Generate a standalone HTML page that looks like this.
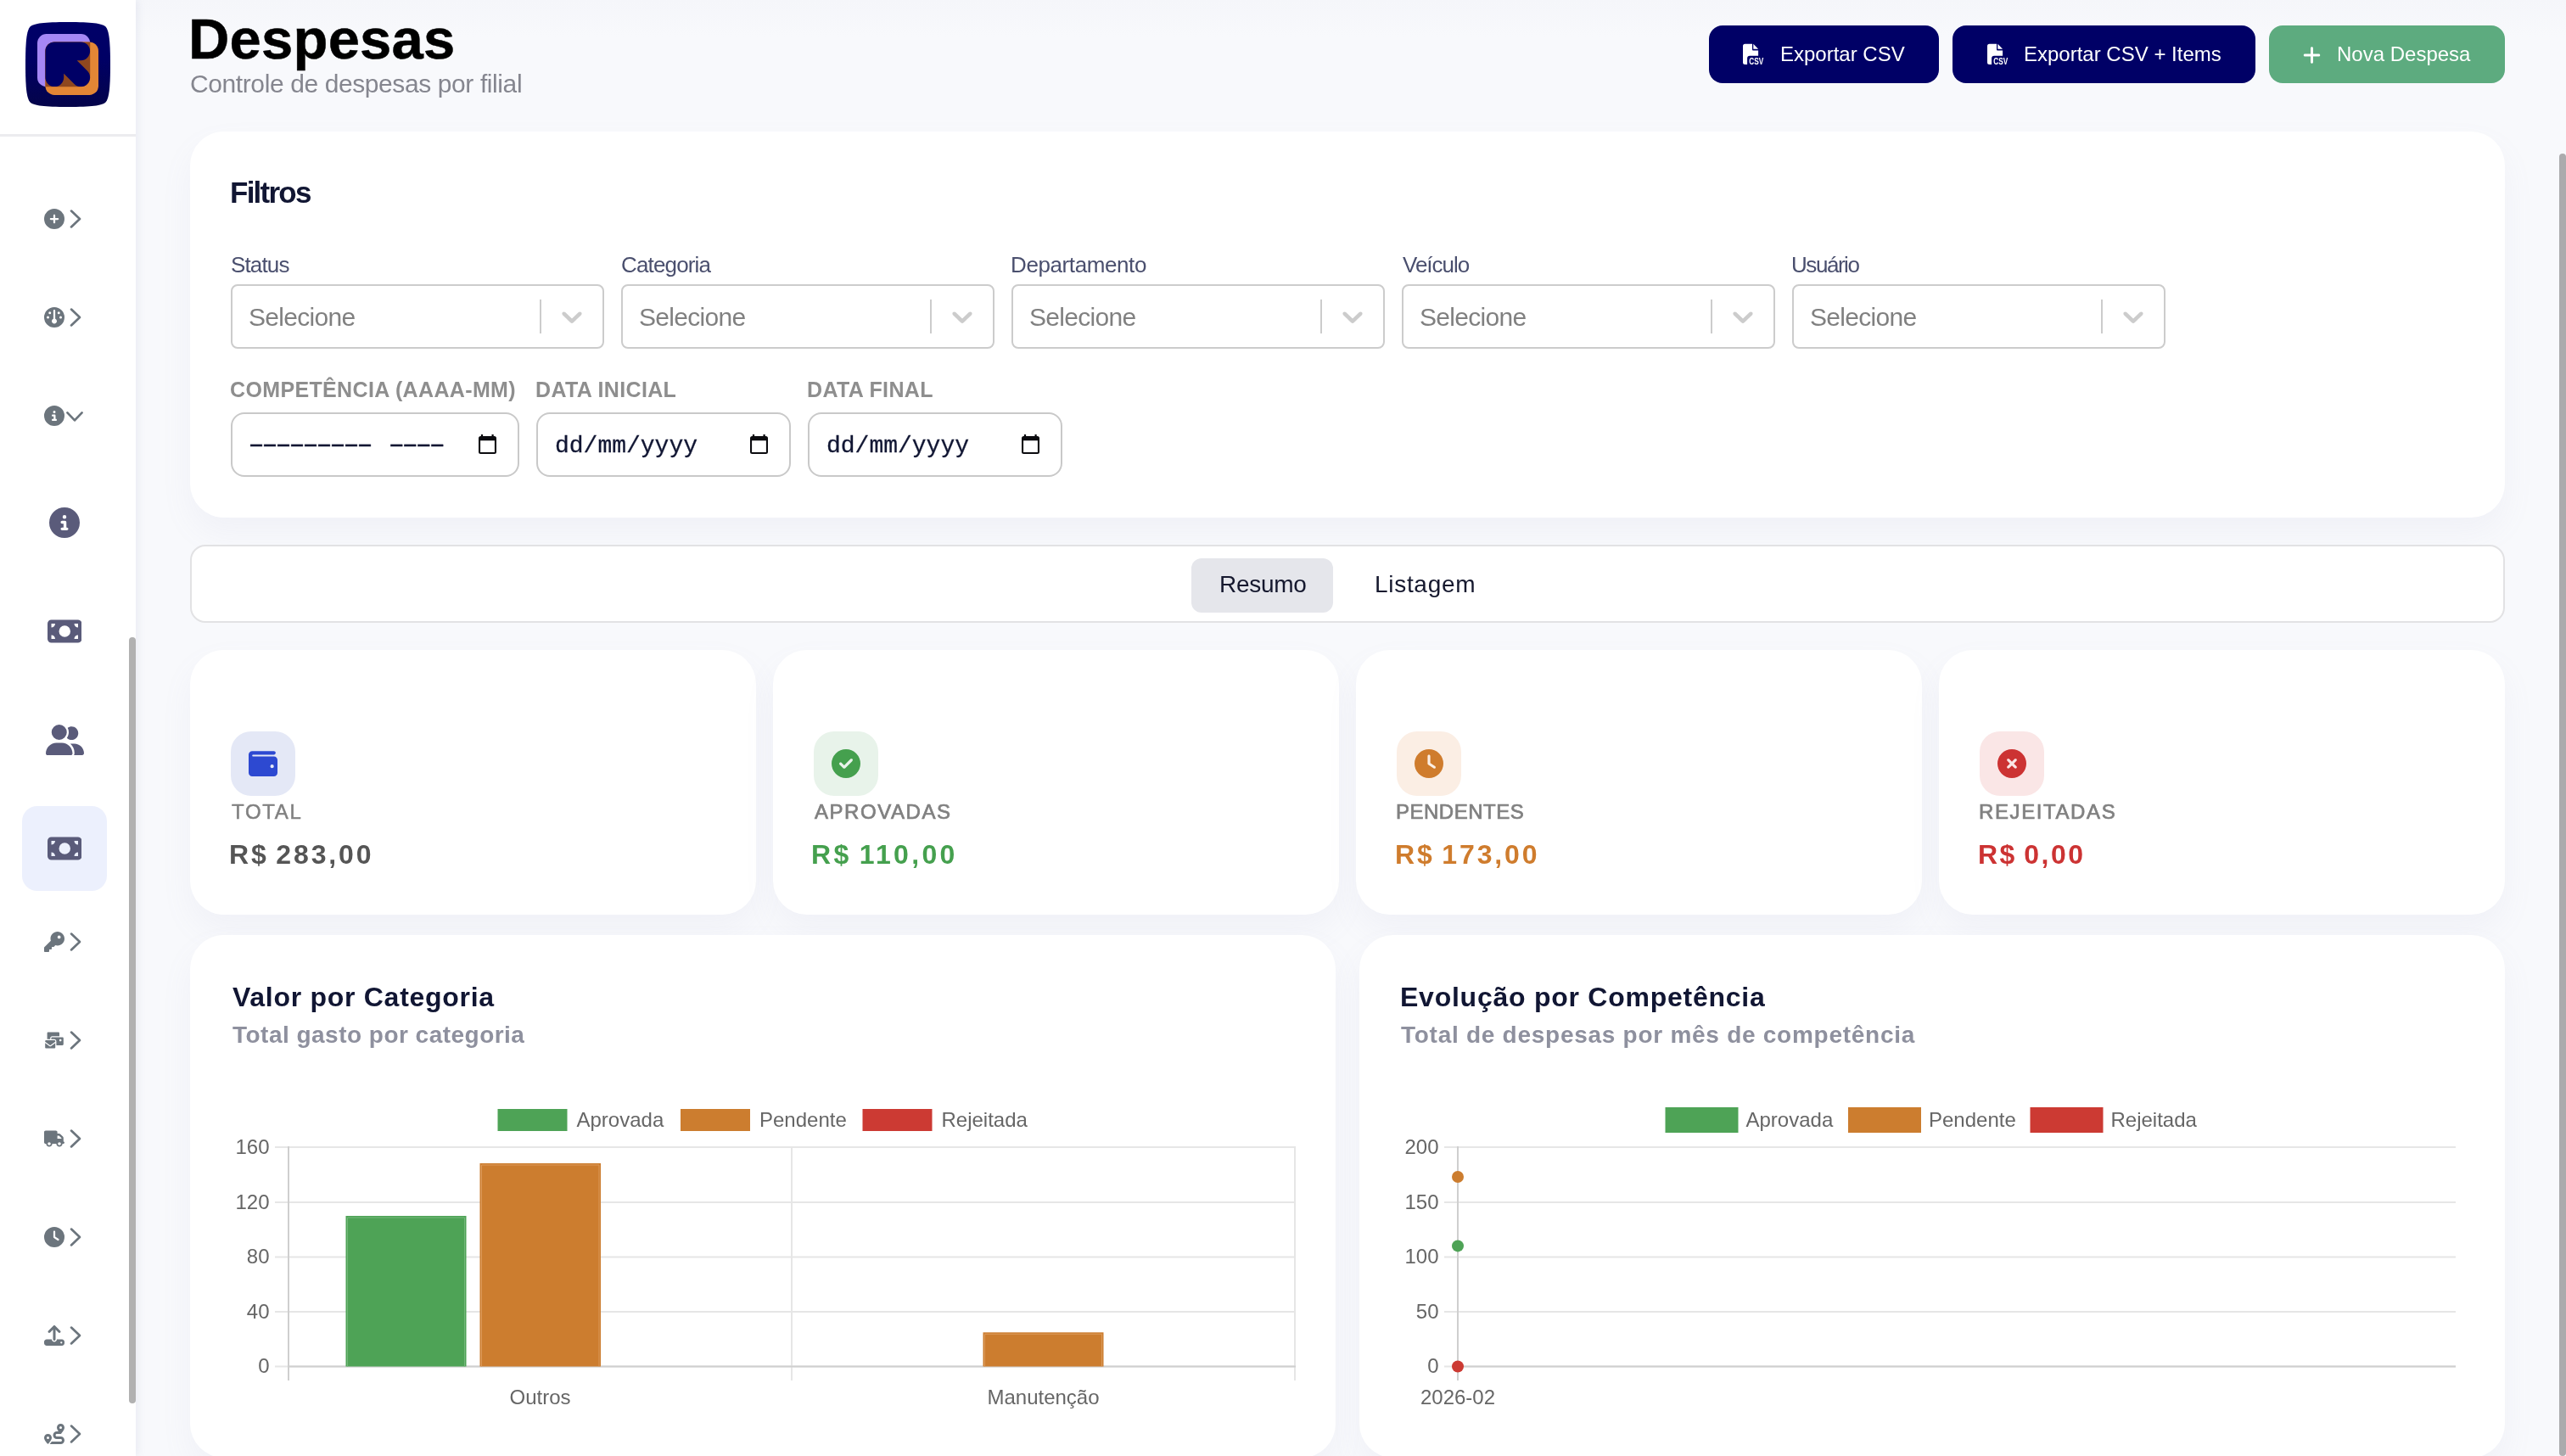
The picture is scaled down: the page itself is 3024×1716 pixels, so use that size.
<!DOCTYPE html>
<html lang="pt-BR">
<head>
<meta charset="utf-8">
<title>Despesas</title>
<style>
*{box-sizing:border-box;margin:0;padding:0}
html,body{width:3024px;height:1716px;overflow:hidden}
body{font-family:"Liberation Sans",sans-serif;background:#f8f9fc;position:relative;color:#111633}
.abs{position:absolute}
.t{position:absolute;white-space:nowrap;line-height:1;will-change:transform}
svg.tx{will-change:transform}
#side{position:absolute;left:0;top:0;width:160px;height:1716px;background:#fff;box-shadow:3px 0 8px rgba(150,153,185,.13)}
#side .hr{position:absolute;left:0;top:158px;width:160px;height:3px;background:#ececef}
#side .sb{position:absolute;left:152px;top:751px;width:8px;height:903px;border-radius:4px;background:#b1b1b1}
#side .act{position:absolute;left:26px;top:950px;width:100px;height:100px;border-radius:18px;background:#ecf0fd}
#main{position:absolute;left:160px;top:0;width:2864px;height:1716px;background:linear-gradient(180deg,#f5f6fa 0,#f8f9fc 44px,#f8f9fc 100%)}
.card{position:absolute;background:#fff;border-radius:40px;box-shadow:0 18px 36px rgba(150,153,185,.075)}
.vsb{position:absolute;left:3016px;top:181px;width:8px;height:1535px;border-radius:4px;background:#ababad}
.btn{position:absolute;top:30px;height:68px;border-radius:16px;color:#fff;border:0;padding:0;font:inherit;text-align:left;overflow:visible}
.sel{position:absolute;top:335px;width:440px;height:76px;border:2px solid #cccccc;border-radius:8px;background:#fff}
.sel i{position:absolute;left:362px;top:16px;width:2px;height:40px;background:#cccccc}
.sel svg{position:absolute;left:380px;top:16px}
.inp{position:absolute;top:486px;height:76px;border:2px solid #c9c9c9;border-radius:16px;background:#fff}
.lab{color:#4a4f6e;font-size:26px;letter-spacing:-.85px}
.ph{color:#808080;font-size:30px;letter-spacing:-.7px}
.lab2{color:#8e8e8e;font-size:25px;font-weight:bold;letter-spacing:.35px}
.mono{font-family:"Liberation Mono",monospace;font-size:28px;color:#111633;-webkit-text-stroke:.3px #111633}

.sl{color:#808080;font-size:24px;letter-spacing:1.1px}
.sv{font-size:32px;font-weight:bold;letter-spacing:2px}
.ct{font-size:32px;font-weight:bold;color:#111633;letter-spacing:.55px}
.cs{font-size:28px;font-weight:bold;color:#8e909e;letter-spacing:.48px}
.bt{font-size:24px;color:#fff}
@media (max-width:2200px){html{zoom:.5}}
</style>
</head>
<body>
<div id="main"></div>
<nav id="side">
  <div class="hr"></div>
  <div class="sb"></div>
  <div class="act"></div>
<svg class="abs" style="left:52px;top:246px" width="24" height="24" viewBox="0 0 512 512"><path fill="#6c757d" d="M256 512A256 256 0 1 0 256 0a256 256 0 1 0 0 512zM232 344V280H168c-13.3 0-24-10.7-24-24s10.7-24 24-24h64V168c0-13.3 10.7-24 24-24s24 10.7 24 24v64h64c13.3 0 24 10.7 24 24s-10.7 24-24 24H280v64c0 13.3-10.7 24-24 24s-24-10.7-24-24z"/></svg>
<svg class="abs" style="left:80px;top:246px" width="20" height="24" viewBox="0 0 20 24"><path d="M4 2.600L14 12L4 21.400" fill="none" stroke="#6c757d" stroke-width="2.700" stroke-linecap="round" stroke-linejoin="round"/></svg>
<svg class="abs" style="left:52px;top:362px" width="24" height="24" viewBox="0 0 512 512"><path fill="#6c757d" d="M0 256a256 256 0 1 1 512 0A256 256 0 1 1 0 256zm320 96c0-26.9-16.5-49.900-40-59.300V88c0-13.300-10.700-24-24-24s-24 10.700-24 24V292.700c-23.500 9.500-40 32.500-40 59.300c0 35.300 28.700 64 64 64s64-28.700 64-64zM144 176a32 32 0 1 0 0-64 32 32 0 1 0 0 64zm-16 80a32 32 0 1 0 -64 0 32 32 0 1 0 64 0zm288 32a32 32 0 1 0 0-64 32 32 0 1 0 0 64zM400 144a32 32 0 1 0 -64 0 32 32 0 1 0 64 0z"/></svg>
<svg class="abs" style="left:80px;top:362px" width="20" height="24" viewBox="0 0 20 24"><path d="M4 2.600L14 12L4 21.400" fill="none" stroke="#6c757d" stroke-width="2.700" stroke-linecap="round" stroke-linejoin="round"/></svg>
<svg class="abs" style="left:52px;top:478px" width="24" height="24" viewBox="0 0 512 512"><path fill="#6c757d" d="M256 512A256 256 0 1 0 256 0a256 256 0 1 0 0 512zM216 336h24V272H216c-13.300 0-24-10.700-24-24s10.700-24 24-24h48c13.300 0 24 10.700 24 24v88h8c13.300 0 24 10.700 24 24s-10.700 24-24 24H216c-13.300 0-24-10.700-24-24s10.700-24 24-24zm40-208a32 32 0 1 1 0 64 32 32 0 1 1 0-64z"/></svg>
<svg class="abs" style="left:76px;top:478px" width="24" height="24" viewBox="0 0 24 24"><path d="M3.400 8.400L12 17.400L20.600 8.400" fill="none" stroke="#6c757d" stroke-width="2.700" stroke-linecap="round" stroke-linejoin="round"/></svg>
<svg class="abs" style="left:52px;top:1098px" width="24" height="24" viewBox="0 0 512 512"><path fill="#6c757d" d="M336 352c97.200 0 176-78.800 176-176S433.200 0 336 0S160 78.800 160 176c0 18.700 2.900 36.800 8.300 53.700L7 391c-4.500 4.500-7 10.600-7 17v80c0 13.300 10.700 24 24 24h80c13.300 0 24-10.700 24-24V448h40c13.300 0 24-10.700 24-24V384h40c6.400 0 12.500-2.500 17-7l33.300-33.300c16.900 5.400 35 8.300 53.700 8.300zM376 96a40 40 0 1 1 0 80 40 40 0 1 1 0-80z"/></svg>
<svg class="abs" style="left:80px;top:1098px" width="20" height="24" viewBox="0 0 20 24"><path d="M4 2.600L14 12L4 21.400" fill="none" stroke="#6c757d" stroke-width="2.700" stroke-linecap="round" stroke-linejoin="round"/></svg>
<svg class="abs" style="left:52px;top:1214px" width="24" height="24" viewBox="0 0 640 512"><path fill="#6c757d" d="M128 0C110.300 0 96 14.300 96 32V224h96V192c0-35.300 28.700-64 64-64H480V32c0-17.700-14.300-32-32-32H128zM256 160c-17.700 0-32 14.300-32 32v32h96c35.300 0 64 28.700 64 64V416H576c17.700 0 32-14.300 32-32V192c0-17.700-14.300-32-32-32H256zm240 64h32c8.800 0 16 7.200 16 16v32c0 8.800-7.200 16-16 16H496c-8.800 0-16-7.200-16-16V240c0-8.800 7.200-16 16-16zM64 256c-17.700 0-32 14.300-32 32v13L187.100 415.900c1.400 1 3.100 1.600 4.900 1.600s3.500-.6 4.900-1.600L352 301V288c0-17.700-14.300-32-32-32H64zm288 84.800L216 441.600c-6.900 5.100-15.300 7.900-24 7.900s-17-2.800-24-7.900L32 340.800V480c0 17.700 14.300 32 32 32H320c17.700 0 32-14.300 32-32V340.800z"/></svg>
<svg class="abs" style="left:80px;top:1214px" width="20" height="24" viewBox="0 0 20 24"><path d="M4 2.600L14 12L4 21.400" fill="none" stroke="#6c757d" stroke-width="2.700" stroke-linecap="round" stroke-linejoin="round"/></svg>
<svg class="abs" style="left:52px;top:1330px" width="24" height="24" viewBox="0 0 640 512"><path fill="#6c757d" d="M48 0C21.500 0 0 21.500 0 48V368c0 26.500 21.500 48 48 48H64c0 53 43 96 96 96s96-43 96-96H384c0 53 43 96 96 96s96-43 96-96h32c17.700 0 32-14.300 32-32s-14.300-32-32-32V288 256 237.300c0-17-6.700-33.300-18.700-45.300L512 114.700c-12-12-28.300-18.700-45.300-18.700H416V48c0-26.500-21.500-48-48-48H48zM416 160h50.700L544 237.300V256H416V160zM112 416a48 48 0 1 1 96 0 48 48 0 1 1 -96 0zm368-48a48 48 0 1 1 0 96 48 48 0 1 1 0-96z"/></svg>
<svg class="abs" style="left:80px;top:1330px" width="20" height="24" viewBox="0 0 20 24"><path d="M4 2.600L14 12L4 21.400" fill="none" stroke="#6c757d" stroke-width="2.700" stroke-linecap="round" stroke-linejoin="round"/></svg>
<svg class="abs" style="left:52px;top:1446px" width="24" height="24" viewBox="0 0 512 512"><path fill="#6c757d" d="M256 0a256 256 0 1 1 0 512A256 256 0 1 1 256 0zM232 120V256c0 8 4 15.500 10.700 20l96 64c11 7.400 25.900 4.400 33.300-6.700s4.400-25.900-6.700-33.300L280 243.200V120c0-13.300-10.700-24-24-24s-24 10.700-24 24z"/></svg>
<svg class="abs" style="left:80px;top:1446px" width="20" height="24" viewBox="0 0 20 24"><path d="M4 2.600L14 12L4 21.400" fill="none" stroke="#6c757d" stroke-width="2.700" stroke-linecap="round" stroke-linejoin="round"/></svg>
<svg class="abs" style="left:52px;top:1562px" width="24" height="24" viewBox="0 0 512 512"><path fill="#6c757d" d="M288 109.300V352c0 17.700-14.300 32-32 32s-32-14.300-32-32V109.300l-73.400 73.400c-12.500 12.500-32.800 12.500-45.300 0s-12.500-32.800 0-45.300l128-128c12.500-12.500 32.800-12.500 45.300 0l128 128c12.500 12.500 12.500 32.800 0 45.300s-32.800 12.500-45.300 0L288 109.300zM64 352H192c0 35.300 28.700 64 64 64s64-28.700 64-64H448c35.300 0 64 28.700 64 64v32c0 35.300-28.700 64-64 64H64c-35.300 0-64-28.700-64-64V416c0-35.300 28.700-64 64-64zM432 456a24 24 0 1 0 0-48 24 24 0 1 0 0 48z"/></svg>
<svg class="abs" style="left:80px;top:1562px" width="20" height="24" viewBox="0 0 20 24"><path d="M4 2.600L14 12L4 21.400" fill="none" stroke="#6c757d" stroke-width="2.700" stroke-linecap="round" stroke-linejoin="round"/></svg>
<svg class="abs" style="left:52px;top:1678px" width="24" height="24" viewBox="0 0 512 512"><path fill="#6c757d" d="M512 96c0 50.200-59.100 125.100-84.600 155c-3.800 4.400-9.400 6.100-14.500 5H320c-17.700 0-32 14.300-32 32s14.300 32 32 32h96c53 0 96 43 96 96s-43 96-96 96H139.600c8.700-9.900 19.300-22.600 30-36.800c6.300-8.400 12.800-17.600 19-27.200H416c17.700 0 32-14.300 32-32s-14.300-32-32-32H320c-53 0-96-43-96-96s43-96 96-96h39.800c-21-31.500-39.800-67.700-39.800-96c0-53 43-96 96-96s96 43 96 96zM117.100 489.100c-3.800 4.300-7.200 8.100-10.100 11.300l-1.800 2-.2-.2c-6 4.600-14.600 4-20-1.800C59.800 473 0 402.500 0 352c0-53 43-96 96-96s96 43 96 96c0 30-21.100 67-43.500 97.900c-10.700 14.700-21.700 28-30.800 38.500l-.6 .7zM128 352a32 32 0 1 0 -64 0 32 32 0 1 0 64 0zM416 128a32 32 0 1 0 0-64 32 32 0 1 0 0 64z"/></svg>
<svg class="abs" style="left:80px;top:1678px" width="20" height="24" viewBox="0 0 20 24"><path d="M4 2.600L14 12L4 21.400" fill="none" stroke="#6c757d" stroke-width="2.700" stroke-linecap="round" stroke-linejoin="round"/></svg>
<svg class="abs" style="left:58px;top:598px" width="36" height="36" viewBox="0 0 512 512"><path fill="#5a5b7a" d="M256 512A256 256 0 1 0 256 0a256 256 0 1 0 0 512zM216 336h24V272H216c-13.300 0-24-10.700-24-24s10.700-24 24-24h48c13.300 0 24 10.700 24 24v88h8c13.300 0 24 10.700 24 24s-10.700 24-24 24H216c-13.300 0-24-10.700-24-24s10.700-24 24-24zm40-208a32 32 0 1 1 0 64 32 32 0 1 1 0-64z"/></svg>
<svg class="abs" style="left:55.75px;top:726px" width="40.5" height="36" viewBox="0 0 576 512"><path fill="#5a5b7a" d="M64 64C28.700 64 0 92.700 0 128V384c0 35.300 28.700 64 64 64H512c35.300 0 64-28.700 64-64V128c0-35.300-28.700-64-64-64H64zm64 320H64V320c35.300 0 64 28.700 64 64zM64 192V128h64c0 35.300-28.700 64-64 64zM448 384c0-35.300 28.700-64 64-64v64H448zm64-192c-35.300 0-64-28.700-64-64h64v64zM288 160a96 96 0 1 1 0 192 96 96 0 1 1 0-192z"/></svg>
<svg class="abs" style="left:54px;top:854px" width="45" height="36" viewBox="0 0 640 512"><path fill="#5a5b7a" d="M96 128a128 128 0 1 1 256 0A128 128 0 1 1 96 128zM0 482.300C0 383.800 79.800 304 178.300 304h91.400C368.200 304 448 383.800 448 482.300c0 16.400-13.300 29.700-29.700 29.700H29.700C13.300 512 0 498.700 0 482.300zM609.300 512H471.400c5.400-9.400 8.600-20.300 8.600-32v-8c0-60.700-27.100-115.200-69.800-151.800c2.400-.1 4.700-.2 7.100-.2h61.400C567.800 320 640 392.200 640 481.300c0 17-13.800 30.700-30.700 30.700zM432 256c-31 0-59-12.600-79.300-32.900C372.400 196.500 384 163.600 384 128c0-26.800-6.600-52.100-18.300-74.300C384.300 40.100 407.200 32 432 32c61.900 0 112 50.100 112 112s-50.100 112-112 112z"/></svg>
<svg class="abs" style="left:55.75px;top:982px" width="40.5" height="36" viewBox="0 0 576 512"><path fill="#5a5b7a" d="M64 64C28.700 64 0 92.700 0 128V384c0 35.300 28.700 64 64 64H512c35.300 0 64-28.700 64-64V128c0-35.300-28.700-64-64-64H64zm64 320H64V320c35.300 0 64 28.700 64 64zM64 192V128h64c0 35.300-28.700 64-64 64zM448 384c0-35.300 28.700-64 64-64v64H448zm64-192c-35.300 0-64-28.700-64-64h64v64zM288 160a96 96 0 1 1 0 192 96 96 0 1 1 0-192z"/></svg>
<svg class="abs" style="left:30px;top:26px" width="100" height="100" viewBox="0 0 100 100">
<defs><linearGradient id="lg" x1="0" y1="0" x2="0" y2="1"><stop offset="0" stop-color="#000068"/><stop offset=".45" stop-color="#000064"/><stop offset="1" stop-color="#04044a"/></linearGradient>
<clipPath id="cp"><rect x="23.400" y="23.400" width="62.600" height="62.600" rx="10.700"/></clipPath></defs>
<path fill="url(#lg)" d="M50 0C78 0 90 1.500 94.500 5.500C98.500 10 100 22 100 50C100 78 98.500 90 94.500 94.500C90 98.500 78 100 50 100C22 100 10 98.500 5.500 94.500C1.500 90 0 78 0 50C0 22 1.500 10 5.500 5.500C10 1.500 22 0 50 0Z"/>
<rect x="14" y="14" width="62.200" height="62.200" rx="10.700" fill="#a587f5"/>
<rect x="23.400" y="23.400" width="62.600" height="62.600" rx="10.700" fill="#e38635"/>
<rect x="14" y="14" width="62.200" height="62.200" rx="10.700" fill="#8f471f" clip-path="url(#cp)"/>
<path d="M65.200 34.300H34.300V65.200M34.300 34.300L65.200 65.200" fill="none" stroke="#000066" stroke-width="21.800" stroke-linecap="round" stroke-linejoin="round"/>
</svg>
</nav>

<!-- header -->
<h1 class="t" id="h1" style="left:222.300px;top:12px;font-size:67px;font-weight:bold;color:#000;letter-spacing:.2px;-webkit-text-stroke:.5px #000">Despesas</h1>
<p class="t" id="h2" style="left:224px;top:84px;font-size:30px;color:#85868f;letter-spacing:-.4px">Controle de despesas por filial</p>


<button type="button" class="btn" style="left:2014px;width:271px;background:#000066"><svg class="abs tx" style="left:40px;top:20px" width="28" height="28" viewBox="0 0 28 28" font-family="Liberation Sans, sans-serif"><path fill="#fff" d="M2.500 1.800H11V8.600A1 1 0 0 0 12 9.600H18.100V15.700H8.200A3.100 3.100 0 0 0 5.100 18.800V26H2.500A2.500 2.500 0 0 1 0 23.500V4.300A2.500 2.500 0 0 1 2.500 1.800ZM12.300 1.800L18.100 7.800H12.300Z"/><text x="7.200" y="26" font-size="10.500" font-weight="bold" fill="#fff" textLength="17" lengthAdjust="spacingAndGlyphs">CSV</text></svg><span class="t bt" id="b1" style="left:84px;top:22px">Exportar CSV</span></button>
<button type="button" class="btn" style="left:2301px;width:357px;background:#000066"><svg class="abs tx" style="left:41px;top:20px" width="28" height="28" viewBox="0 0 28 28" font-family="Liberation Sans, sans-serif"><path fill="#fff" d="M2.500 1.800H11V8.600A1 1 0 0 0 12 9.600H18.100V15.700H8.200A3.100 3.100 0 0 0 5.100 18.800V26H2.500A2.500 2.500 0 0 1 0 23.500V4.300A2.500 2.500 0 0 1 2.500 1.800ZM12.300 1.800L18.100 7.800H12.300Z"/><text x="7.200" y="26" font-size="10.500" font-weight="bold" fill="#fff" textLength="17" lengthAdjust="spacingAndGlyphs">CSV</text></svg><span class="t bt" id="b2" style="left:84px;top:22px">Exportar CSV + Items</span></button>
<button type="button" class="btn" style="left:2674px;width:278px;background:#5dab7f"><svg class="abs" id="plusic" style="left:40.1px;top:22.5px" width="21" height="24" viewBox="0 0 448 512"><path fill="#fff" d="M256 80c0-17.700-14.300-32-32-32s-32 14.300-32 32V224H48c-17.700 0-32 14.300-32 32s14.300 32 32 32H192V432c0 17.700 14.300 32 32 32s32-14.300 32-32V288H400c17.700 0 32-14.300 32-32s-14.300-32-32-32H256V80z"/></svg><span class="t bt" id="b3" style="left:80px;top:22px">Nova Despesa</span></button>
<!-- filter card -->
<div class="card" style="left:224px;top:155px;width:2728px;height:455px"></div>
<!-- tabs card -->
<div class="abs" style="left:224px;top:642px;width:2728px;height:92px;background:#fff;border:2px solid #e2e2e4;border-radius:18px"></div>
<!-- stat cards -->
<div class="card" style="left:224px;top:766px;width:667px;height:312px"></div>
<div class="card" style="left:911px;top:766px;width:667px;height:312px"></div>
<div class="card" style="left:1598px;top:766px;width:667px;height:312px"></div>
<div class="card" style="left:2285px;top:766px;width:667px;height:312px"></div>
<!-- chart cards -->
<div class="card" style="left:224px;top:1102px;width:1350px;height:616px"></div>
<div class="card" style="left:1602px;top:1102px;width:1350px;height:616px"></div>


<!-- filter contents -->
<h2 class="t" id="filtros" style="left:271px;top:209px;font-size:35px;font-weight:bold;color:#111633;letter-spacing:-1.75px">Filtros</h2>

<label class="t lab" id="l1" style="left:272px;top:299px">Status</label>
<label class="t lab" id="l2" style="left:732px;top:299px">Categoria</label>
<label class="t lab" id="l3" style="left:1191px;top:299px;letter-spacing:-.4px">Departamento</label>
<label class="t lab" id="l4" style="left:1653px;top:299px;letter-spacing:-1px">Veículo</label>
<label class="t lab" id="l5" style="left:2111px;top:299px;letter-spacing:-1.45px">Usuário</label>

<div class="sel" style="left:272px"><i></i><svg width="40" height="40" viewBox="0 0 20 20"><path fill="#cccccc" d="M4.516 7.548c0.436-0.446 1.043-0.481 1.576 0l3.908 3.747 3.908-3.747c0.533-0.481 1.141-0.446 1.574 0 0.436 0.445 0.408 1.197 0 1.615-0.406 0.418-4.695 4.502-4.695 4.502-0.217 0.223-0.502 0.335-0.787 0.335s-0.570-0.112-0.789-0.335c0 0-4.287-4.084-4.695-4.502s-0.436-1.170 0-1.615z"/></svg></div>
<div class="sel" style="left:732px"><i></i><svg width="40" height="40" viewBox="0 0 20 20"><path fill="#cccccc" d="M4.516 7.548c0.436-0.446 1.043-0.481 1.576 0l3.908 3.747 3.908-3.747c0.533-0.481 1.141-0.446 1.574 0 0.436 0.445 0.408 1.197 0 1.615-0.406 0.418-4.695 4.502-4.695 4.502-0.217 0.223-0.502 0.335-0.787 0.335s-0.570-0.112-0.789-0.335c0 0-4.287-4.084-4.695-4.502s-0.436-1.170 0-1.615z"/></svg></div>
<div class="sel" style="left:1192px"><i></i><svg width="40" height="40" viewBox="0 0 20 20"><path fill="#cccccc" d="M4.516 7.548c0.436-0.446 1.043-0.481 1.576 0l3.908 3.747 3.908-3.747c0.533-0.481 1.141-0.446 1.574 0 0.436 0.445 0.408 1.197 0 1.615-0.406 0.418-4.695 4.502-4.695 4.502-0.217 0.223-0.502 0.335-0.787 0.335s-0.570-0.112-0.789-0.335c0 0-4.287-4.084-4.695-4.502s-0.436-1.170 0-1.615z"/></svg></div>
<div class="sel" style="left:1652px"><i></i><svg width="40" height="40" viewBox="0 0 20 20"><path fill="#cccccc" d="M4.516 7.548c0.436-0.446 1.043-0.481 1.576 0l3.908 3.747 3.908-3.747c0.533-0.481 1.141-0.446 1.574 0 0.436 0.445 0.408 1.197 0 1.615-0.406 0.418-4.695 4.502-4.695 4.502-0.217 0.223-0.502 0.335-0.787 0.335s-0.570-0.112-0.789-0.335c0 0-4.287-4.084-4.695-4.502s-0.436-1.170 0-1.615z"/></svg></div>
<div class="sel" style="left:2112px"><i></i><svg width="40" height="40" viewBox="0 0 20 20"><path fill="#cccccc" d="M4.516 7.548c0.436-0.446 1.043-0.481 1.576 0l3.908 3.747 3.908-3.747c0.533-0.481 1.141-0.446 1.574 0 0.436 0.445 0.408 1.197 0 1.615-0.406 0.418-4.695 4.502-4.695 4.502-0.217 0.223-0.502 0.335-0.787 0.335s-0.570-0.112-0.789-0.335c0 0-4.287-4.084-4.695-4.502s-0.436-1.170 0-1.615z"/></svg></div>

<div class="t ph" id="p1" style="left:293px;top:358.500px">Selecione</div>
<div class="t ph" id="p2" style="left:753px;top:358.500px">Selecione</div>
<div class="t ph" id="p3" style="left:1213px;top:358.500px">Selecione</div>
<div class="t ph" id="p4" style="left:1673px;top:358.500px">Selecione</div>
<div class="t ph" id="p5" style="left:2133px;top:358.500px">Selecione</div>

<label class="t lab2" id="m1" style="left:271px;top:447px">COMPETÊNCIA (AAAA-MM)</label>
<label class="t lab2" id="m2" style="left:631px;top:447px">DATA INICIAL</label>
<label class="t lab2" id="m3" style="left:951px;top:447px">DATA FINAL</label>

<div class="inp" style="left:272px;width:340px"></div>
<div class="inp" style="left:632px;width:300px"></div>
<div class="inp" style="left:952px;width:300px"></div>
<div class="t mono" id="d1" style="left:287px;top:510.600px;transform-origin:0 50%;transform:scaleX(1.79);letter-spacing:-7.860px;word-spacing:2.900px">--------- ----</div>
<div class="t mono" id="d2" style="left:654px;top:512px">dd/mm/yyyy</div>
<div class="t mono" id="d3" style="left:974px;top:512px">dd/mm/yyyy</div>
<svg class="abs cal" style="left:563.6px;top:512px" width="21" height="23" viewBox="0 0 21 23"><path d="M2.900 0h2.200v2h10.400V0h2.200v2h.800A2.500 2.500 0 0 1 21 4.500v16a2.500 2.500 0 0 1-2.500 2.500h-16A2.500 2.500 0 0 1 0 20.500v-16A2.500 2.500 0 0 1 2.500 2h.400zM2.100 7.200V20.900h16.800V7.200z" fill="#0b0b0f" fill-rule="evenodd"/></svg>
<svg class="abs cal" style="left:883.6px;top:512px" width="21" height="23" viewBox="0 0 21 23"><path d="M2.900 0h2.200v2h10.400V0h2.200v2h.800A2.500 2.500 0 0 1 21 4.500v16a2.500 2.500 0 0 1-2.500 2.500h-16A2.500 2.500 0 0 1 0 20.500v-16A2.500 2.500 0 0 1 2.500 2h.400zM2.100 7.200V20.900h16.800V7.200z" fill="#0b0b0f" fill-rule="evenodd"/></svg>
<svg class="abs cal" style="left:1203.6px;top:512px" width="21" height="23" viewBox="0 0 21 23"><path d="M2.900 0h2.200v2h10.400V0h2.200v2h.800A2.500 2.500 0 0 1 21 4.500v16a2.500 2.500 0 0 1-2.500 2.500h-16A2.500 2.500 0 0 1 0 20.500v-16A2.500 2.500 0 0 1 2.500 2h.400zM2.100 7.200V20.900h16.800V7.200z" fill="#0b0b0f" fill-rule="evenodd"/></svg>

<!-- tabs -->
<div class="abs" style="left:1404px;top:658px;width:166.500px;height:64px;border-radius:12px;background:#e5e6eb"></div>
<span class="t" id="tab1" style="left:1437px;top:675px;font-size:28px;color:#15182e;letter-spacing:-.3px">Resumo</span>
<span class="t" id="tab2" style="left:1620px;top:675px;font-size:28px;color:#15182e;letter-spacing:.7px">Listagem</span>

<!-- stats -->
<div class="abs" style="left:272px;top:862px;width:76px;height:76px;border-radius:24px;background:#e4e8f6"></div>
<div class="abs" style="left:959px;top:862px;width:76px;height:76px;border-radius:24px;background:#e8f3ea"></div>
<div class="abs" style="left:1646px;top:862px;width:76px;height:76px;border-radius:24px;background:#fbeee4"></div>
<div class="abs" style="left:2333px;top:862px;width:76px;height:76px;border-radius:24px;background:#fae6e6"></div>

<svg class="abs" style="left:293px;top:883px" width="34" height="34" viewBox="0 0 512 512"><path fill="#2d49d1" d="M64 32C28.700 32 0 60.700 0 96V416c0 35.300 28.700 64 64 64H448c35.300 0 64-28.700 64-64V192c0-35.300-28.700-64-64-64H80c-8.800 0-16-7.200-16-16s7.200-16 16-16H448c17.700 0 32-14.300 32-32s-14.300-32-32-32H64zM416 272a32 32 0 1 1 0 64 32 32 0 1 1 0-64z"/></svg>
<svg class="abs" style="left:980px;top:883px" width="34" height="34" viewBox="0 0 512 512"><path fill="#45a04e" d="M256 512A256 256 0 1 0 256 0a256 256 0 1 0 0 512zM369 209L241 337c-9.400 9.400-24.600 9.400-33.900 0l-64-64c-9.400-9.400-9.400-24.600 0-33.900s24.600-9.400 33.900 0l47 47L335 175c9.400-9.400 24.600-9.400 33.900 0s9.400 24.600 0 33.900z"/></svg>
<svg class="abs" style="left:1667px;top:883px" width="34" height="34" viewBox="0 0 512 512"><path fill="#cf7c2d" d="M256 0a256 256 0 1 1 0 512A256 256 0 1 1 256 0zM232 120V256c0 8 4 15.500 10.700 20l96 64c11 7.400 25.900 4.400 33.300-6.700s4.400-25.900-6.700-33.300L280 243.200V120c0-13.300-10.700-24-24-24s-24 10.700-24 24z"/></svg>
<svg class="abs" style="left:2354px;top:883px" width="34" height="34" viewBox="0 0 512 512"><path fill="#cc3333" d="M256 512A256 256 0 1 0 256 0a256 256 0 1 0 0 512zM175 175c9.400-9.400 24.600-9.400 33.900 0l47 47 47-47c9.400-9.400 24.600-9.400 33.900 0s9.400 24.600 0 33.900l-47 47 47 47c9.400 9.400 9.400 24.600 0 33.900s-24.600 9.400-33.900 0l-47-47-47 47c-9.400 9.400-24.600 9.400-33.900 0s-9.400-24.600 0-33.900l47-47-47-47c-9.400-9.400-9.400-24.600 0-33.900z"/></svg>
<span class="t sl" id="s1" style="-webkit-text-stroke:.5px #808080;left:273px;top:945px;letter-spacing:1.7px">TOTAL</span>
<span class="t sl" id="s2" style="-webkit-text-stroke:.7px #808080;left:960px;top:945px;letter-spacing:1.55px">APROVADAS</span>
<span class="t sl" id="s3" style="-webkit-text-stroke:.7px #808080;left:1645px;top:945px;letter-spacing:.5px">PENDENTES</span>
<span class="t sl" id="s4" style="-webkit-text-stroke:.7px #808080;left:2332px;top:945px;letter-spacing:1.6px">REJEITADAS</span>
<strong class="t sv" id="v1" style="left:270px;top:990.500px;letter-spacing:2.850px;word-spacing:-3px;color:#555555">R$ 283,00</strong>
<strong class="t sv" id="v2" style="left:956px;top:990.500px;letter-spacing:3.300px;word-spacing:-3px;color:#45a04e">R$ 110,00</strong>
<strong class="t sv" id="v3" style="left:1644px;top:990.500px;letter-spacing:2.850px;word-spacing:-3px;color:#cf7c2d">R$ 173,00</strong>
<strong class="t sv" id="v4" style="left:2331px;top:990.500px;letter-spacing:2.500px;word-spacing:-3px;color:#cc3333">R$ 0,00</strong>

<!-- chart titles -->
<h3 class="t ct" id="c1" style="left:274px;top:1159px;letter-spacing:.72px">Valor por Categoria</h3>
<p class="t cs" id="c2" style="left:274px;top:1206px">Total gasto por categoria</p>
<h3 class="t ct" id="c3" style="left:1650px;top:1159px;letter-spacing:.75px">Evolução por Competência</h3>
<p class="t cs" id="c4" style="left:1651px;top:1206px;letter-spacing:.73px">Total de despesas por mês de competência</p>
<!-- charts -->
<svg class="abs tx" style="left:0;top:0" width="3024" height="1716" viewBox="0 0 3024 1716" font-family="Liberation Sans, sans-serif" font-size="24" fill="#666666">
<rect x="324" y="1351" width="1203" height="2" fill="#e6e6e6"/>
<rect x="324" y="1416" width="1203" height="2" fill="#e6e6e6"/>
<rect x="324" y="1480.5" width="1203" height="2" fill="#e6e6e6"/>
<rect x="324" y="1545" width="1203" height="2" fill="#e6e6e6"/>
<rect x="324" y="1609.5" width="1203" height="2" fill="#e6e6e6"/>
<rect x="339" y="1351" width="2" height="276" fill="#e6e6e6"/>
<rect x="932" y="1351" width="2" height="276" fill="#e6e6e6"/>
<rect x="1525" y="1351" width="2" height="276" fill="#e6e6e6"/>
<rect x="339" y="1351" width="2" height="276" fill="#cfcfcf"/>
<rect x="340" y="1609.5" width="1187" height="2" fill="#cfcfcf"/>
<rect x="407.5" y="1433" width="142.0" height="177.5" fill="#4ea356"/>
<path d="M409.5 1610.5V1435H547.5V1610.5" fill="none" stroke="#74b87a" stroke-width="1"/>
<rect x="565.5" y="1371" width="142.5" height="239.5" fill="#cc7d2f"/>
<path d="M567.5 1610.5V1373H706V1610.5" fill="none" stroke="#dc9a5a" stroke-width="1"/>
<rect x="1158.5" y="1570.3" width="142.0" height="40.200000000000045" fill="#cc7d2f"/>
<path d="M1160.5 1610.5V1572.3H1298.5V1610.5" fill="none" stroke="#dc9a5a" stroke-width="1"/>
<text x="317.500" y="1359.75" text-anchor="end">160</text>
<text x="317.500" y="1424.75" text-anchor="end">120</text>
<text x="317.500" y="1489.25" text-anchor="end">80</text>
<text x="317.500" y="1553.75" text-anchor="end">40</text>
<text x="317.500" y="1618.25" text-anchor="end">0</text>
<text x="636.5" y="1655.25" text-anchor="middle">Outros</text>
<text x="1229.5" y="1655.25" text-anchor="middle">Manutenção</text>
<rect x="586.5" y="1307" width="82" height="26" fill="#4ea356"/>
<text x="679.5" y="1327.75">Aprovada</text>
<rect x="802" y="1307" width="82" height="26" fill="#cc7d2f"/>
<text x="895" y="1327.75">Pendente</text>
<rect x="1016.5" y="1307" width="82" height="26" fill="#cc3a33"/>
<text x="1109.5" y="1327.75">Rejeitada</text>
<rect x="1702" y="1351" width="1192" height="2" fill="#e6e6e6"/>
<rect x="1702" y="1416" width="1192" height="2" fill="#e6e6e6"/>
<rect x="1702" y="1480.5" width="1192" height="2" fill="#e6e6e6"/>
<rect x="1702" y="1545" width="1192" height="2" fill="#e6e6e6"/>
<rect x="1702" y="1609.5" width="1192" height="2" fill="#e6e6e6"/>
<rect x="1717" y="1351" width="2" height="276" fill="#cfcfcf"/>
<rect x="1718" y="1609.5" width="1176" height="2" fill="#cfcfcf"/>
<text x="1695.500" y="1359.75" text-anchor="end">200</text>
<text x="1695.500" y="1424.75" text-anchor="end">150</text>
<text x="1695.500" y="1489.25" text-anchor="end">100</text>
<text x="1695.500" y="1553.75" text-anchor="end">50</text>
<text x="1695.500" y="1618.25" text-anchor="end">0</text>
<text x="1718" y="1655.25" text-anchor="middle">2026-02</text>
<circle cx="1718" cy="1387" r="7" fill="#cc7d2f"/>
<circle cx="1718" cy="1468.4" r="7" fill="#4ea356"/>
<circle cx="1718" cy="1610.5" r="7" fill="#cc3a33"/>
<rect x="1962.5" y="1305" width="86" height="30" fill="#4ea356"/>
<text x="2057.5" y="1327.75">Aprovada</text>
<rect x="2178" y="1305" width="86" height="30" fill="#cc7d2f"/>
<text x="2273" y="1327.75">Pendente</text>
<rect x="2392.5" y="1305" width="86" height="30" fill="#cc3a33"/>
<text x="2487.5" y="1327.75">Rejeitada</text>
</svg>
<div class="vsb"></div>
</body>
</html>
